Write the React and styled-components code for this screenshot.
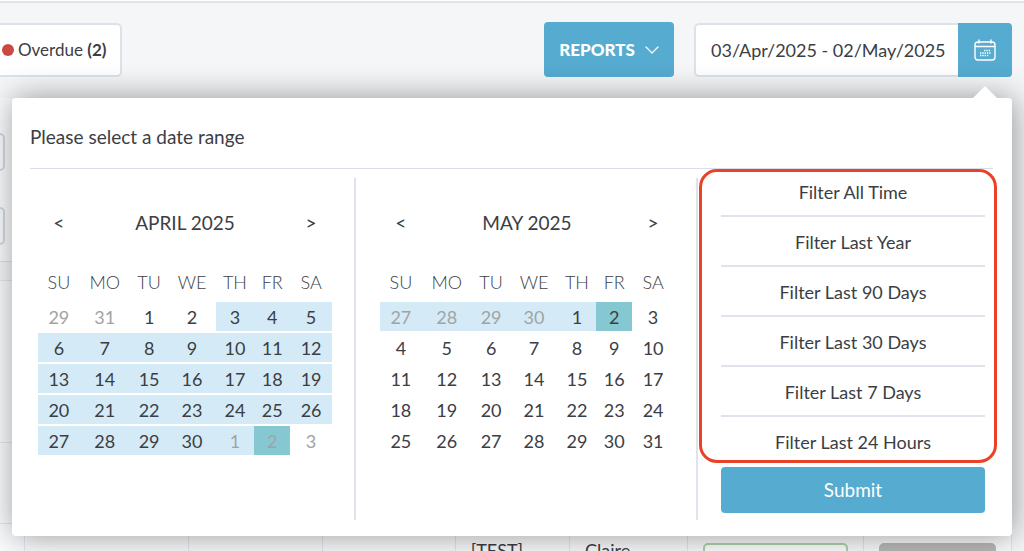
import { useState } from "react";
import styled, { createGlobalStyle } from "styled-components";

const GlobalStyle = createGlobalStyle`
  *, *::before, *::after {
    box-sizing: border-box;
  }
  body {
    margin: 0;
    background: #f4f6f8;
    color: #3b3e44;
    font-family: Lato, "Open Sans", sans-serif;
    font-size: 18px;
    line-height: 24px;
  }
  button, input {
    margin: 0;
    padding: 0;
    border: none;
    background: none;
    color: inherit;
    font: inherit;
  }
  button {
    cursor: pointer;
  }
`;

const Page = styled.div`
  height: 100vh;
  display: flex;
  flex-direction: column;
  border-top: 1px solid #fff;
  overflow: hidden;
`;

const TopBar = styled.header`
  padding: 19px 12px 21px 0;
  display: flex;
  align-items: center;
  gap: 20px;
  border-top: 2px solid #dfe4ec;
`;

const StatusChip = styled.button`
  height: 54px;
  margin-right: auto;
  padding: 0 14px 0 2px;
  display: flex;
  align-items: center;
  gap: 4px;
  border: 2px solid #dde2ea;
  border-left: none;
  border-radius: 0 5px 5px 0;
  background: #fff;
  font-size: 17px;
`;

const Dot = styled.span`
  width: 12px;
  height: 12px;
  border-radius: 50%;
  background: #c84a42;
`;

const ReportsButton = styled.button`
  width: 130px;
  height: 55px;
  display: flex;
  align-items: center;
  justify-content: center;
  gap: 10px;
  border-radius: 4px;
  background: #56abd0;
  color: #fff;
  font-size: 17px;
  font-weight: 900;
`;

const DateField = styled.div`
  height: 54px;
  display: flex;
`;

const DateInput = styled.input`
  width: 264px;
  padding-left: 15px;
  border: 2px solid #dde2ea;
  border-right: none;
  border-radius: 5px 0 0 5px;
  background: #fff;
`;

const CalendarButton = styled.button`
  width: 54px;
  display: grid;
  place-items: center;
  border-radius: 0 4px 4px 0;
  background: #56abd0;
  color: #fff;
`;

const Body = styled.main`
  position: relative;
  flex: 1;
  display: flex;
  flex-direction: column;
  gap: 18px;
`;

const SearchPanel = styled.section`
  width: calc(100% - 12px);
  height: 164px;
  padding-top: 35px;
  display: grid;
  align-content: start;
  gap: 36px;
  border-bottom: 1px solid #dde2ea;
  background: #fafbfc;
`;

const SearchField = styled.div`
  width: 5px;
  height: 38px;
  border: 2px solid #d3d8e2;
  border-left: none;
  border-radius: 0 5px 5px 0;
`;

const Jobs = styled.table`
  width: calc(100% - 12px);
  border-collapse: collapse;
  table-layout: fixed;
  background: #fafbfc;
`;

const JobCell = styled.td`
  height: ${(props) => props.$height}px;
  padding: 14px 15px 0;
  border: 1px solid #e3e6ec;
  border-left: none;
  vertical-align: top;
`;

const Tag = styled.div`
  height: 40px;
  margin-top: 5px;
  border: 2px solid ${(props) => props.$line};
  border-radius: 5px;
  background: ${(props) => props.$fill};
`;

const Popover = styled.section`
  position: absolute;
  top: 0;
  left: 12px;
  right: 12px;
  padding: 0 19px 16px 18px;
  border-radius: 4px;
  background: #fff;
  box-shadow: 2px 0 32px rgba(0, 0, 0, 0.4);

  &::before {
    content: "";
    position: absolute;
    right: 15px;
    bottom: 100%;
    border: 12px solid transparent;
    border-top: none;
    border-bottom-color: #fff;
  }
`;

const Title = styled.h2`
  margin: 0;
  padding: 27px 0 19px;
  border-bottom: 1px solid #d9dee7;
  font-size: 19px;
  font-weight: 400;
`;

const Columns = styled.div`
  display: grid;
  grid-template-columns: 326fr 342fr 295fr;
`;

const Month = styled.div`
  height: 342px;
  margin-top: 9px;
  padding: 0 22px 0 ${(props) => (props.$first ? 8 : 24)}px;
  border-right: 2px solid #dfe3eb;
`;

const MonthTable = styled.table`
  width: 100%;
  border-spacing: 0 2px;
  table-layout: fixed;
  text-align: center;
`;

const MonthHead = styled.th`
  height: 85px;
  padding: 0;
  font-size: 19px;
  font-weight: 400;
`;

const Weekday = styled.th`
  height: 33px;
  padding: 0 0 4px;
  font-weight: 300;
`;

const DayCell = styled.td`
  height: 29px;
  padding: 0;
  background: ${(props) => dayFill[props.$state]};
  color: ${(props) => (props.$muted ? "#a0a3a6" : "inherit")};
`;

const DayButton = styled.button`
  width: 100%;
  display: block;
`;

const Side = styled.div`
  padding: 0 8px 0 23px;
`;

const FilterList = styled.ul`
  position: relative;
  margin: 0;
  padding: 0;
  display: grid;
  gap: 2px;
  list-style: none;

  &::after {
    content: "";
    position: absolute;
    inset: 0 -12px 4px -22px;
    border: 3px solid #ea4228;
    border-radius: 18px;
    pointer-events: none;
  }
`;

const FilterButton = styled.button`
  width: 100%;
  height: 48px;
  border-bottom: 2px solid ${(props) => (props.$last ? "transparent" : "#dfe4ec")};
`;

const Submit = styled.button`
  width: 100%;
  height: 46px;
  border-radius: 4px;
  background: #56abd0;
  color: #fff;
  font-size: 19px;
`;

const dayFill = {
  none: "transparent",
  range: "#d4ebf7",
  end: "#86c8d1",
};

const weekdays = [
  ["SU", "14.2%"],
  ["MO", "17%"],
  ["TU", "13.2%"],
  ["WE", "16%"],
  ["TH", "13.2%"],
  ["FR", "12.2%"],
  ["SA", "14.2%"],
];

const months = [
  {
    name: "APRIL 2025",
    days: [29, 31, ...days(1, 30), 1, 2, 3],
    own: [2, 31],
    range: [4, 33],
    end: 33,
  },
  {
    name: "MAY 2025",
    days: [...days(27, 30), ...days(1, 31)],
    own: [4, 34],
    range: [0, 5],
    end: 5,
  },
];

const filters = [
  "Filter All Time",
  "Filter Last Year",
  "Filter Last 90 Days",
  "Filter Last 30 Days",
  "Filter Last 7 Days",
  "Filter Last 24 Hours",
];

const jobColumns = ["2.4%", "16.2%", "13.3%", "13.1%", "11.3%", "11.7%", "17.4%", "14.6%"];

function days(from, to) {
  return Array.from({ length: to - from + 1 }, (_, i) => from + i);
}

function within(index, [first, last]) {
  return index >= first && index <= last;
}

function CalendarIcon() {
  return (
    <svg width="24" height="24" viewBox="0 0 24 24" fill="none" stroke="currentColor" strokeLinecap="round">
      <rect x="2" y="4" width="20" height="18" rx="3" strokeWidth="1.4" />
      <path d="M2.500 8.500h19M6 2v3M18 2v3" strokeWidth="1.4" />
      <path
        d="M11 12.500h7M7 15h11M7 17.500h9"
        strokeWidth="1.4"
        strokeLinecap="butt"
        strokeDasharray="1.4 0.9"
      />
    </svg>
  );
}

function Calendar({ month, first }) {
  const weeks = [0, 7, 14, 21, 28];
  const dayState = (i) => {
    if (i === month.end) return "end";
    return within(i, month.range) ? "range" : "none";
  };

  return (
    <Month $first={first}>
      <MonthTable>
        <colgroup>
          {weekdays.map(([day, width]) => (
            <col key={day} width={width} />
          ))}
        </colgroup>
        <thead>
          <tr>
            <MonthHead>
              <button aria-label="Previous month">&lt;</button>
            </MonthHead>
            <MonthHead colSpan={5}>{month.name}</MonthHead>
            <MonthHead>
              <button aria-label="Next month">&gt;</button>
            </MonthHead>
          </tr>
          <tr>
            {weekdays.map(([day]) => (
              <Weekday key={day}>{day}</Weekday>
            ))}
          </tr>
        </thead>
        <tbody>
          {weeks.map((start) => (
            <tr key={start}>
              {month.days.slice(start, start + 7).map((day, i) => (
                <DayCell
                  key={start + i}
                  $state={dayState(start + i)}
                  $muted={!within(start + i, month.own)}
                >
                  <DayButton>{day}</DayButton>
                </DayCell>
              ))}
            </tr>
          ))}
        </tbody>
      </MonthTable>
    </Month>
  );
}

function DateRangePopover() {
  return (
    <Popover>
      <Title>Please select a date range</Title>
      <Columns>
        <Calendar month={months[0]} first />
        <Calendar month={months[1]} />
        <Side>
          <FilterList>
            {filters.map((label, i) => (
              <li key={label}>
                <FilterButton $last={i === filters.length - 1}>{label}</FilterButton>
              </li>
            ))}
          </FilterList>
          <Submit>Submit</Submit>
        </Side>
      </Columns>
    </Popover>
  );
}

export default function App() {
  const [open, setOpen] = useState(true);

  return (
    <Page>
      <GlobalStyle />
      <TopBar>
        <StatusChip>
          <Dot />
          <span>
            Overdue <b>(2)</b>
          </span>
        </StatusChip>
        <ReportsButton>
          REPORTS
          <svg width="14" height="8" viewBox="0 0 14 8" fill="none" stroke="currentColor" strokeWidth="1.3">
            <path d="M1 1l6 6 6-6" strokeLinecap="round" strokeLinejoin="round" />
          </svg>
        </ReportsButton>
        <DateField>
          <DateInput aria-label="Date range" defaultValue="03/Apr/2025 - 02/May/2025" />
          <CalendarButton aria-label="Open calendar" onClick={() => setOpen(!open)}>
            <CalendarIcon />
          </CalendarButton>
        </DateField>
      </TopBar>
      <Body>
        <SearchPanel>
          <SearchField />
          <SearchField />
        </SearchPanel>
        <Jobs>
          <colgroup>
            {jobColumns.map((width, i) => (
              <col key={i} width={width} />
            ))}
          </colgroup>
          <tbody>
            {[162, 81].map((height) => (
              <tr key={height}>
                <JobCell $height={height} colSpan={8} />
              </tr>
            ))}
            <tr>
              {jobColumns.map((width, i) => (
                <JobCell key={i} $height={81}>
                  {i === 4 && "[TEST]"}
                  {i === 5 && "Claire"}
                  {i === 6 && <Tag $line="#a9d3ae" $fill="#fff" />}
                  {i === 7 && <Tag $line="#b9b9b9" $fill="#b9b9b9" />}
                </JobCell>
              ))}
            </tr>
          </tbody>
        </Jobs>
        {open && <DateRangePopover />}
      </Body>
    </Page>
  );
}
